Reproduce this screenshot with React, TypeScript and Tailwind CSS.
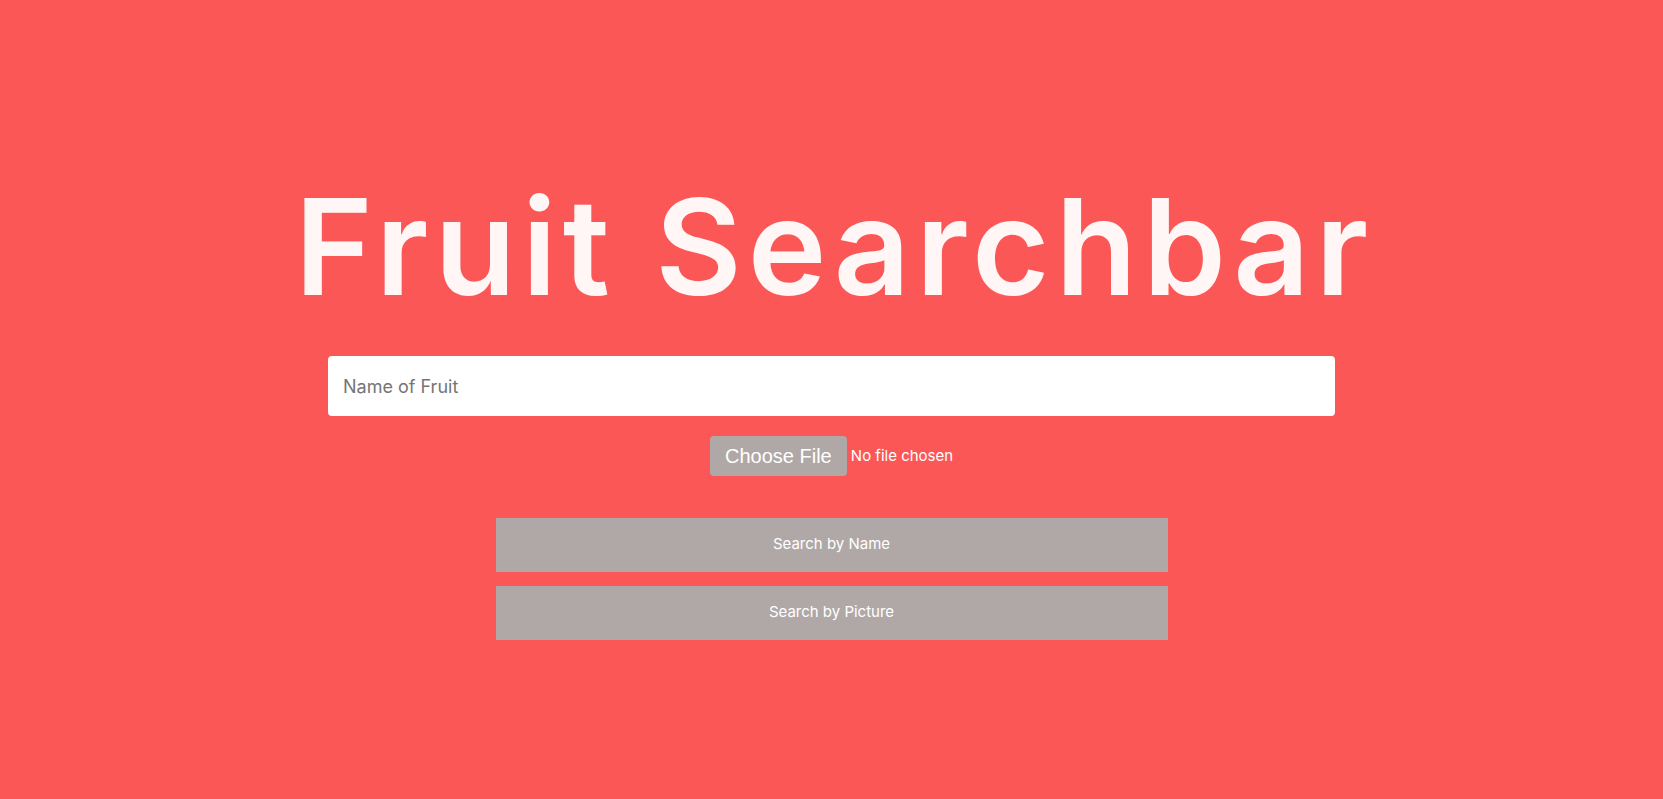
import React from "react";

export default function App() {
  return (
    <div
      className="min-h-[799px] w-full bg-[#fc5757] flex flex-col items-center"
      style={{ fontFamily: "Inter, 'Noto Sans', sans-serif" }}
    >
      <h1 className="mt-[170px] pl-[6px] text-[133px] leading-[1] font-semibold text-[#fff6f5] tracking-[6px] h-[152px] flex items-center">
        Fruit Searchbar
      </h1>
      <input
        type="text"
        placeholder="Name of Fruit"
        className="mt-[34px] w-[1007px] h-[60px] bg-white rounded-[4px] px-[15px] text-[18px] text-[#333] placeholder:text-[#757575] outline-none"
      />
      <div className="mt-[20px] flex items-center h-[40px]">
        <button
          className="h-[40px] w-[137px] rounded-[4px] bg-[#b0a8a7] text-white text-[20px]"
          style={{ fontFamily: "'Liberation Sans', Arial, sans-serif" }}
        >
          Choose File
        </button>
        <span className="ml-[4px] text-white text-[15px]">No file chosen</span>
      </div>
      <div className="mt-[42px] flex flex-col gap-[14px]">
        <button className="w-[672px] h-[54px] bg-[#b0a8a7] text-white text-[15px] pb-[2px]">
          Search by Name
        </button>
        <button className="w-[672px] h-[54px] bg-[#b0a8a7] text-white text-[15px] pb-[2px]">
          Search by Picture
        </button>
      </div>
    </div>
  );
}
